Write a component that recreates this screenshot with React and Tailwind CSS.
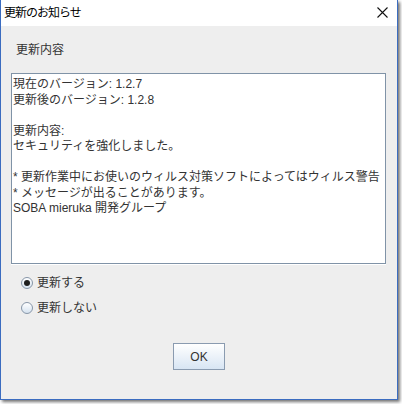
import React from "react";

const FONT = { fontFamily: "'Liberation Sans', 'Noto Sans CJK JP', sans-serif" };

const lines = [
  "現在のバージョン: 1.2.7",
  "更新後のバージョン: 1.2.8",
  "",
  "更新内容:",
  "セキュリティを強化しました。",
  "",
  "* 更新作業中にお使いのウィルス対策ソフトによってはウィルス警告",
  "* メッセージが出ることがあります。",
  "SOBA mieruka 開発グループ",
];

function Radio({ checked, label }) {
  return (
    <label className="flex items-center h-[25px] pl-[10px] gap-[4px] text-[12px] text-[#333]">
      <span className="w-[12px] h-[12px] rounded-full border border-[#8796a8] bg-gradient-to-b from-white to-[#d5e2ef] flex items-center justify-center">
        {checked && <span className="w-[6px] h-[6px] rounded-full bg-[#1e1e1e]" />}
      </span>
      <span className="leading-none">{label}</span>
    </label>
  );
}

export default function App() {
  return (
    <div className="w-[402px] h-[404px] bg-white" style={FONT}>
      <div className="w-[398px] h-[400px] flex flex-col border-x border-b border-[#3b6cc0] bg-[#eeeeee] shadow-[2px_2px_3px_rgba(0,0,0,0.55)]">
        {/* Title bar */}
        <div className="h-[26px] shrink-0 bg-white flex items-center justify-between pl-[3px] pr-[9px]">
          <span className="text-[12px] text-black tracking-[-1px]">更新のお知らせ</span>
          <svg width="11" height="11" viewBox="0 0 11 11" className="mb-[1px]">
            <path d="M0.5 0.5 L10.5 10.5 M10.5 0.5 L0.5 10.5" stroke="#111" strokeWidth="1.1" />
          </svg>
        </div>

        {/* Body */}
        <div className="flex flex-col px-[10px] pt-[16px]">
          <div className="h-[16px] leading-[16px] pl-[5px] text-[12px] text-[#333]">更新内容</div>

          <div className="mt-[15px] w-[375px] h-[191px] border border-[#8093a7] bg-white shadow-[0_1px_0_#ffffff] pt-[3px] pl-px overflow-hidden">
            {lines.map((l, i) => (
              <div key={i} className="h-[15.5px] leading-[15.5px] text-[12px] text-[#333] whitespace-pre">
                {l}
              </div>
            ))}
          </div>

          <div className="mt-[6px] flex flex-col">
            <Radio checked label="更新する" />
            <Radio label="更新しない" />
          </div>

          <div className="mt-[23px] flex justify-center">
            <button className="w-[52px] h-[27px] border border-[#8a9bb0] bg-gradient-to-b from-white to-[#d8e5f3] text-[12px] text-[#333]">
              OK
            </button>
          </div>
        </div>
      </div>
    </div>
  );
}
